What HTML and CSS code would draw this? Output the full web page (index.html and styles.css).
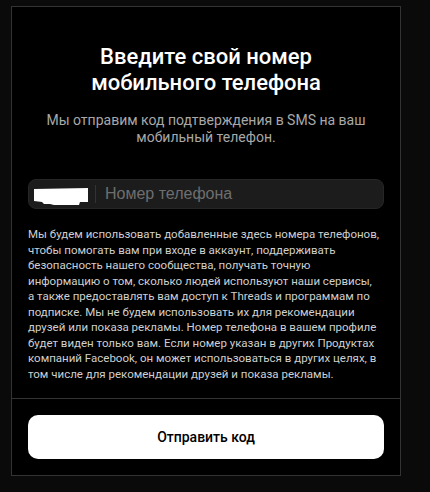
FILE: index.html
```html
<!DOCTYPE html>
<html lang="ru">

<head>
    <meta charset="UTF-8">
    <meta name="viewport" content="width=device-width, initial-scale=1.0">
    <title>Номер телефона</title>
    <link rel="stylesheet" href="styles.css">
</head>

<body>
    <div class="dialog">
        <div class="content">
            <h1>Введите свой номер мобильного телефона</h1>
            <p class="subtitle">Мы отправим код подтверждения в SMS на ваш мобильный телефон.</p>

            <div class="phone-field">
                <span class="country">
                    <svg width="56" height="22" viewBox="0 0 56 22">
                        <path d="M0 4 L54 3 L54 17 L46 17 L45 20 L20 20 L16 19 L10 19 L8 17 L0 16 Z" fill="#fff"/>
                    </svg>
                </span>
                <span class="sep"></span>
                <input type="tel" placeholder="Номер телефона">
            </div>

            <p class="notice">Мы будем использовать добавленные здесь номера телефонов, чтобы помогать вам при входе в аккаунт, поддерживать безопасность нашего сообщества, получать точную информацию о том, сколько людей используют наши сервисы, а&nbsp;также предоставлять вам доступ к Threads и программам по подписке. Мы не будем использовать их для рекомендации друзей или показа рекламы. Номер телефона в вашем профиле будет виден только вам. Если номер указан в других Продуктах компаний Facebook, он может использоваться в других целях, в том числе для рекомендации друзей и показа рекламы.</p>
        </div>

        <div class="footer">
            <button type="button">Отправить код</button>
        </div>
    </div>
</body>

</html>
```

FILE: styles.css
```css
body {
    margin: 0;
    padding: 6px 0 0 11px;
    background-color: #0a0a0a;
    font-family: Roboto, "Noto Sans", sans-serif;
    color: #fff;
}

.dialog {
    box-sizing: border-box;
    width: 390px;
    height: 470px;
    background-color: #000;
    border: 1px solid #333;
    display: flex;
    flex-direction: column;
}

.content {
    flex: 1;
    padding: 37px 16px 0;
}

.content h1 {
    margin: 0 auto;
    width: 250px;
    font-size: 22px;
    line-height: 26px;
    font-weight: 500;
    text-align: center;
}

.subtitle {
    margin: 16px 0 0;
    padding: 0 8px;
    font-size: 14px;
    line-height: 17px;
    color: #a8a8a8;
    text-align: center;
}

.phone-field {
    margin-top: 33px;
    height: 30px;
    box-sizing: border-box;
    background-color: #1c1c1c;
    border: 1px solid #262626;
    border-radius: 8px;
    display: flex;
    align-items: center;
}

.country {
    display: flex;
    margin-left: 5px;
    margin-top: 3px;
}

.sep {
    width: 1px;
    height: 18px;
    background-color: #333;
    margin-left: 5px;
}

.phone-field input {
    flex: 1;
    min-width: 0;
    margin-left: 9px;
    background: transparent;
    border: none;
    outline: none;
    font-family: "Liberation Sans", Arial, sans-serif;
    font-size: 16px;
    color: #fff;
    padding: 0;
}

.phone-field input::placeholder {
    color: #6e6e6e;
}

.notice {
    margin: 18px 0 0;
    padding-right: 2px;
    font-size: 11.5px;
    line-height: 15.5px;
    color: #cfcfcf;
}

.footer {
    border-top: 1px solid #333;
    padding: 16px;
}

.footer button {
    width: 100%;
    height: 44px;
    border: none;
    border-radius: 10px;
    background-color: #fff;
    color: #000;
    font-family: Roboto, "Noto Sans", sans-serif;
    font-size: 14px;
    font-weight: 500;
    cursor: pointer;
}
```
